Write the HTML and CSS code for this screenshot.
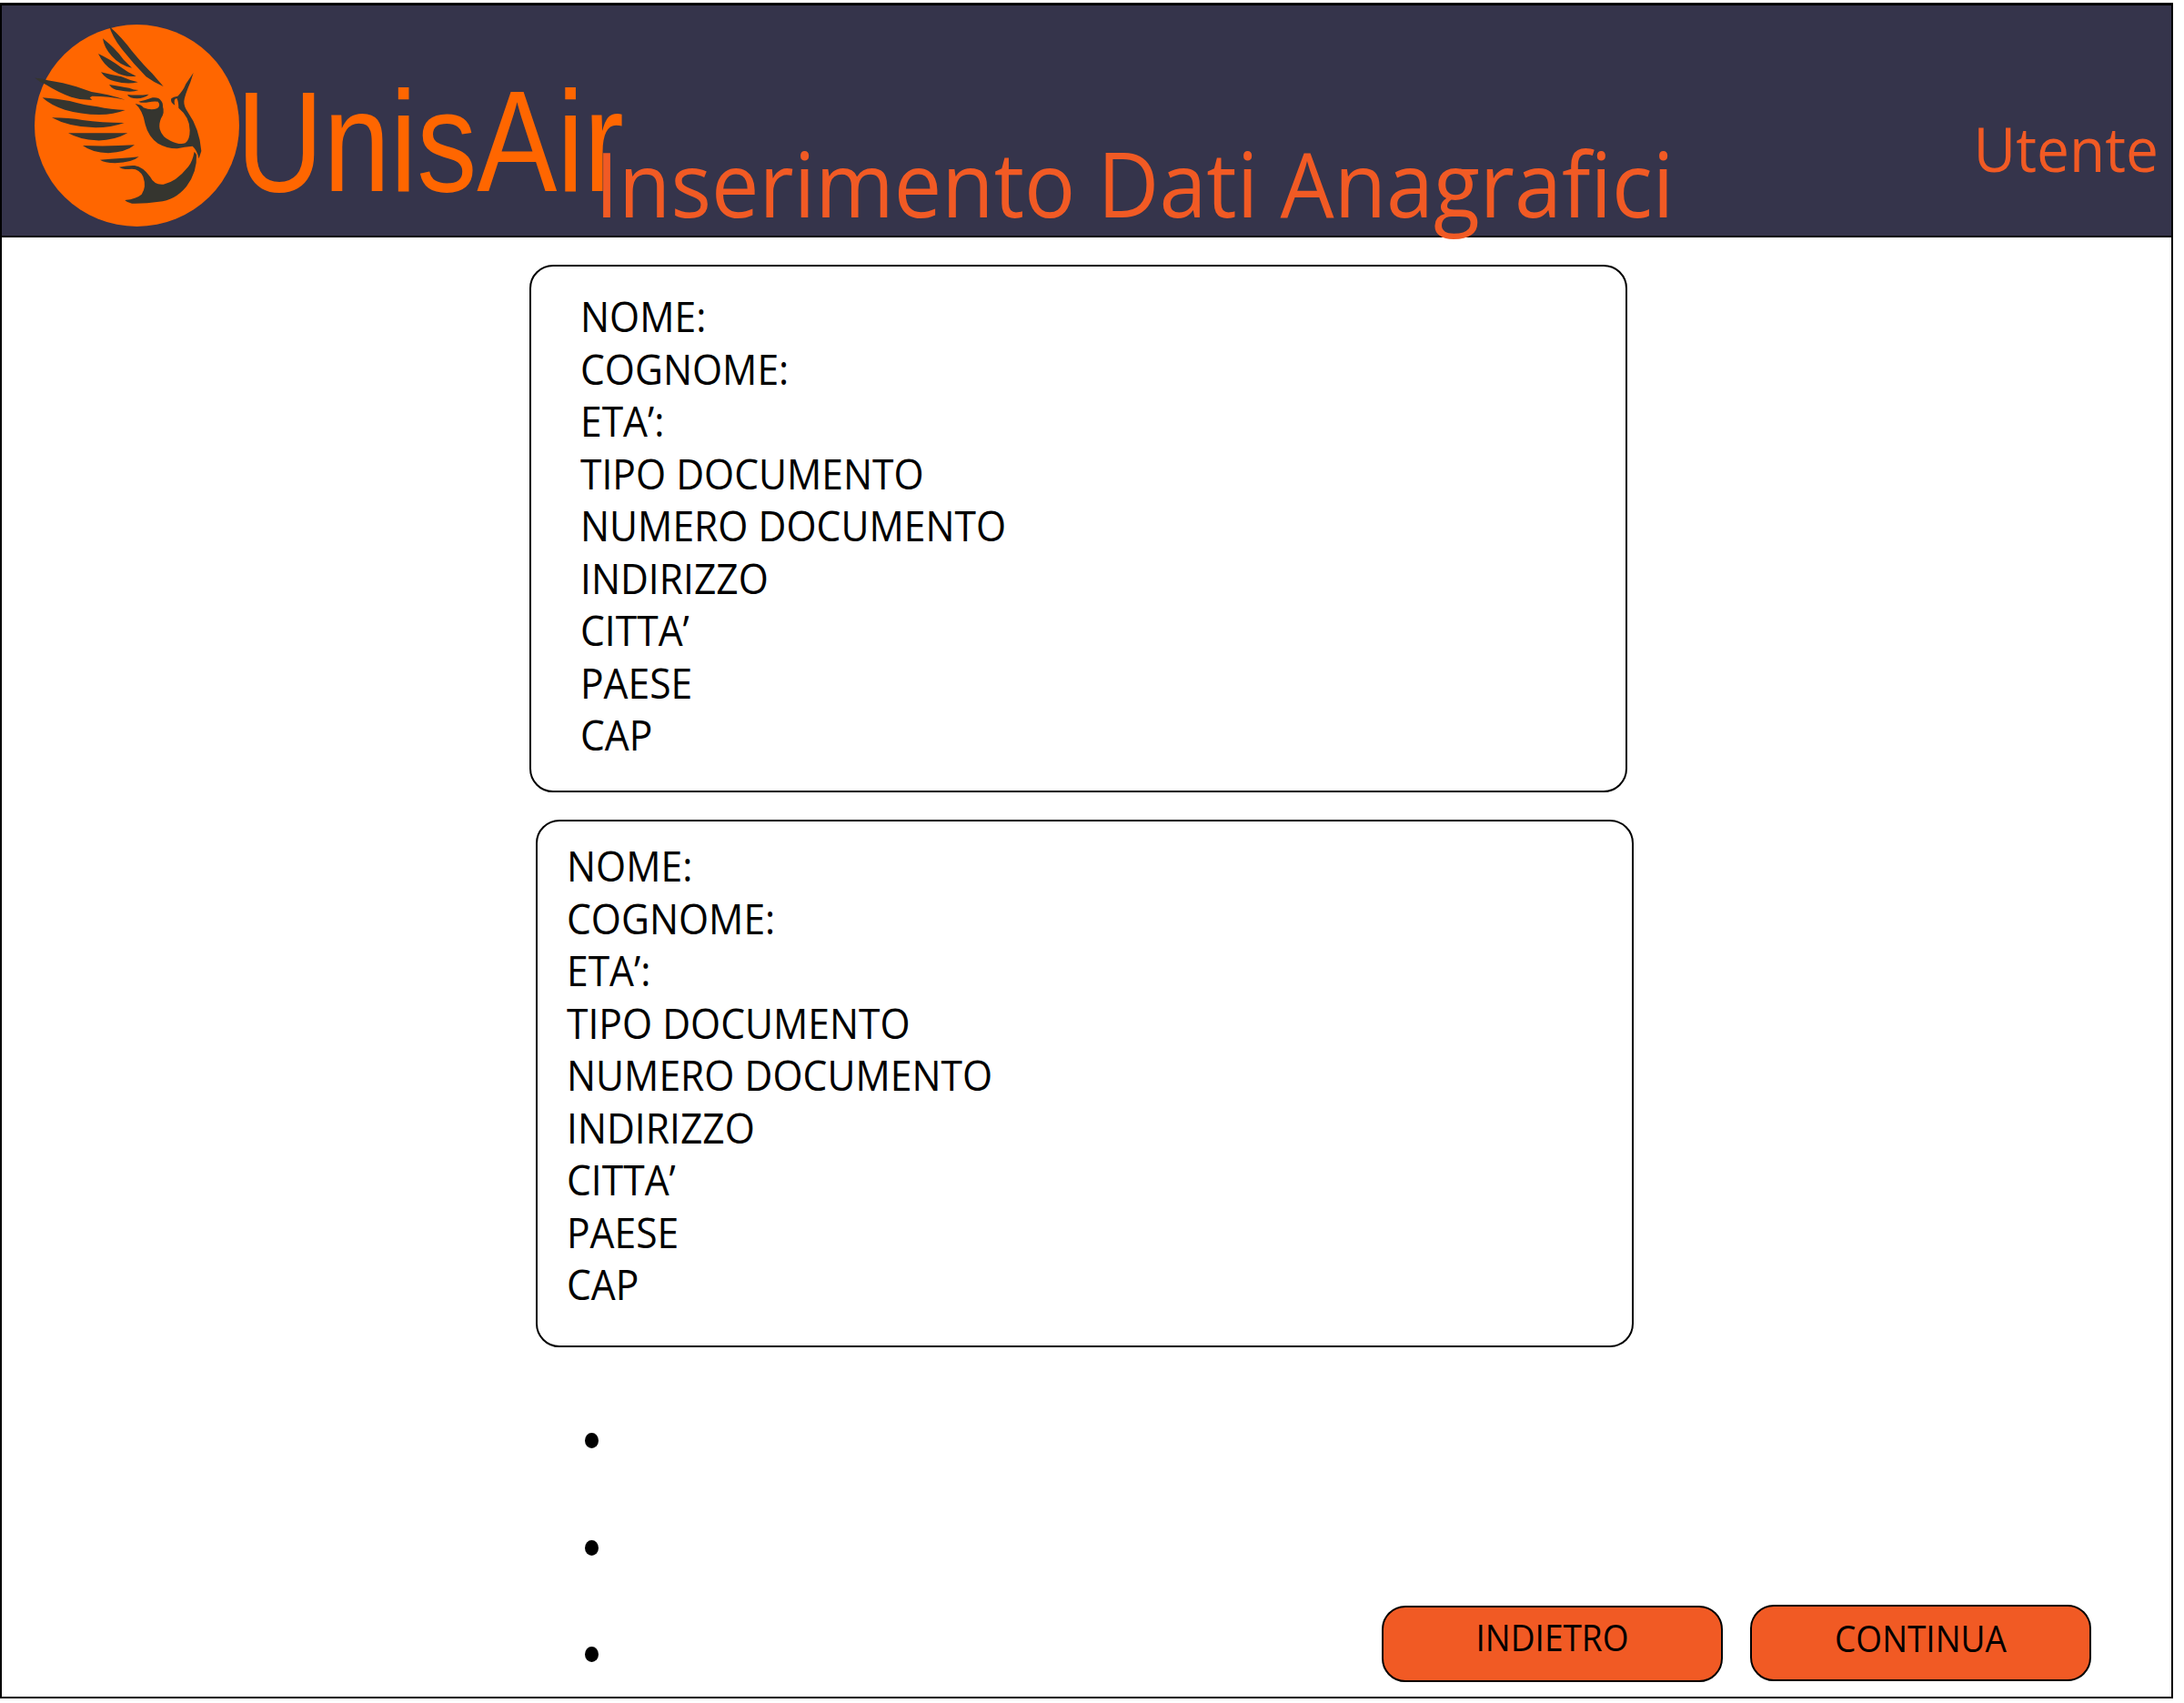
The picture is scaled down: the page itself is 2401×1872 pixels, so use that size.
FILE: index.html
```html
<!DOCTYPE html>
<html lang="it">
<head>
<meta charset="utf-8">
<title>UnisAir - Inserimento Dati Anagrafici</title>
<link rel="stylesheet" href="styles.css">
</head>
<body>
<div class="frame">
  <header class="header">
    <svg class="logo" viewBox="0 0 720 705" aria-hidden="true">
      <ellipse cx="361.500" cy="354" rx="337.500" ry="333" fill="#ff6600"/>
      <g fill="#35352f">
        <path d="M269 21L278 34Q310 62 345 108Q388 160 412 182Q430 203 449 225Q420 214 392 193Q350 150 312 102Q279 61 269 21Z"/>
        <path d="M249 67Q290 99 318 137L345 164Q304 154 279 125Q253 98 249 67Z"/>
        <path d="M234 117Q276 137 306 160Q332 180 359 191Q322 197 284 174Q252 155 234 117Z"/>
        <path d="M243 178Q278 187 311 193Q338 205 365 211Q330 220 287 208Q260 202 243 178Z"/>
        <path d="M270 219Q309 226 336 230Q351 237 367 237Q344 247 303 238Q282 237 270 219Z"/>
        <path d="M330 252Q365 256 401 251Q386 264 362 265Q337 265 330 252Z"/>
        <path d="M25 197Q45 196 67 205Q120 213 162 226L212 243Q265 250 323 269Q270 257 214 257L206 262L214 269Q178 271 145 260Q105 246 60 218Q40 210 25 197Z"/>
        <path d="M50 262Q98 265 140 273Q190 287 232 292Q275 302 323 303Q284 318 238 318Q175 317 124 302Q78 288 50 262Z"/>
        <path d="M81 328Q139 328 182 336Q245 345 320 345Q276 361 225 361Q139 360 81 328Z"/>
        <path d="M135 379Q235 378 331 379Q283 405 228 403Q174 401 135 379Z"/>
        <path d="M183 420Q270 423 354 418Q326 442 267 445Q213 443 183 420Z"/>
        <path d="M240 467Q311 463 368 457Q347 476 290 478Q254 477 240 467Z"/>
        <path d="M367 275Q393 270 413 262Q434 260 440 271Q448 279 447 292Q454 311 441 331Q433 350 437 366Q445 393 472 404Q502 419 521 412Q536 402 536 370Q536 326 499 296Q499 275 493 264Q481 266 487 287Q470 278 475 265Q481 259 496 257Q514 240 523 217L548 180L538 211Q518 258 517 274Q516 291 529 309Q568 364 574 438L566 463Q560 435 545 422Q518 424 495 430Q463 431 431 413Q399 390 389 350Q381 303 356 282Q377 285 383 295Q409 306 429 297Q441 287 431 275Q416 273 401 277Q378 281 367 275Z"/>
        <path d="M303 491Q333 485 354 486Q382 490 405 523Q419 551 449 548Q490 541 531 490Q545 472 551 440L558 450Q561 507 525 555Q486 602 434 605Q390 612 345 611Q327 606 322 600Q360 596 377 581Q394 557 382 523Q368 492 335 498Q314 499 303 491Z"/>
      </g>
    </svg>
    <span class="brand">UnisAir</span>
    <h1 class="title">Inserimento Dati Anagrafici</h1>
    <span class="user">Utente</span>
  </header>
  <main class="content">
    <section class="panel panel-first">
      <ul class="fields">
        <li>NOME:</li>
        <li>COGNOME:</li>
        <li>ETA’:</li>
        <li>TIPO DOCUMENTO</li>
        <li>NUMERO DOCUMENTO</li>
        <li>INDIRIZZO</li>
        <li>CITTA’</li>
        <li>PAESE</li>
        <li>CAP</li>
      </ul>
    </section>
    <section class="panel panel-second">
      <ul class="fields">
        <li>NOME:</li>
        <li>COGNOME:</li>
        <li>ETA’:</li>
        <li>TIPO DOCUMENTO</li>
        <li>NUMERO DOCUMENTO</li>
        <li>INDIRIZZO</li>
        <li>CITTA’</li>
        <li>PAESE</li>
        <li>CAP</li>
      </ul>
    </section>
    <footer class="footer">
      <div class="dots"><i class="dot"></i><i class="dot"></i><i class="dot"></i></div>
      <nav class="actions">
        <button class="button button-back"><span>INDIETRO</span></button>
        <button class="button button-next"><span>CONTINUA</span></button>
      </nav>
    </footer>
  </main>
</div>
</body>
</html>
```
FILE: styles.css
```css
* { box-sizing: border-box; }

body {
  margin: 0;
  padding-top: 3px;
  background: #fff;
  color: #000;
  font-family: "Open Sans", "Noto Sans", sans-serif;
}

.frame {
  width: 2389px;
  height: 1864px;
  border: 2px solid #000;
  border-top-width: 3px;
}

.header {
  position: relative;
  display: flex;
  height: 255px;
  padding: 14px 14px 0 28px;
  border-bottom: 2px solid #000;
  background: #35344b;
  color: #f15a24;
  white-space: nowrap;
}

.logo { width: 240px; height: 235px; flex: none; }

.brand {
  position: absolute;
  left: 257.500px;
  top: 63px;
  font: 157.500px/172px "Liberation Sans", Arial, sans-serif;
  color: #ff6600;
  transform: scaleX(.839);
  transform-origin: left;
}

.title {
  position: absolute;
  left: 652px;
  top: 128px;
  margin: 0;
  font-size: 98px;
  font-weight: 400;
  line-height: 134px;
  transform: scaleX(.954);
  transform-origin: left;
}

.user {
  margin: 98px 0 0 auto;
  font-size: 67px;
  line-height: 90px;
  height: 90px;
  transform: scaleX(.955);
  transform-origin: right;
}

.content { display: flex; flex-direction: column; }

.panel {
  width: 1207px;
  height: 580px;
  border: 2px solid #000;
  border-radius: 26px;
}

.panel-first { margin: 30px 0 0 580px; padding: 26px 0 0 53.500px; }
.panel-second { margin: 30px 0 0 587px; padding: 20.400px 0 0 31.500px; }

.fields {
  margin: 0;
  padding: 0;
  list-style: none;
  font-size: 45.500px;
  line-height: 57.500px;
  white-space: nowrap;
  transform: scaleX(.936);
  transform-origin: left;
}

.footer {
  display: flex;
  justify-content: space-between;
  padding: 94px 88.500px 0 640.500px;
}

.dots { display: flex; flex-direction: column; gap: 100.500px; }
.dot { width: 15px; height: 17px; border-radius: 50%; background: #000; }

.actions { display: flex; gap: 30px; padding-top: 188.500px; }

.button {
  display: block;
  width: 375px;
  height: 84px;
  padding: 0;
  border: 2px solid #000;
  border-radius: 26px;
  background: #f15a24;
  color: #000;
  font: 40px/54px "Open Sans", "Noto Sans", sans-serif;
}

.button span { display: block; height: 68px; transform: scaleX(.925); }
.button-back { margin-top: 1.500px; }
.button-next span { height: 64px; }
```
